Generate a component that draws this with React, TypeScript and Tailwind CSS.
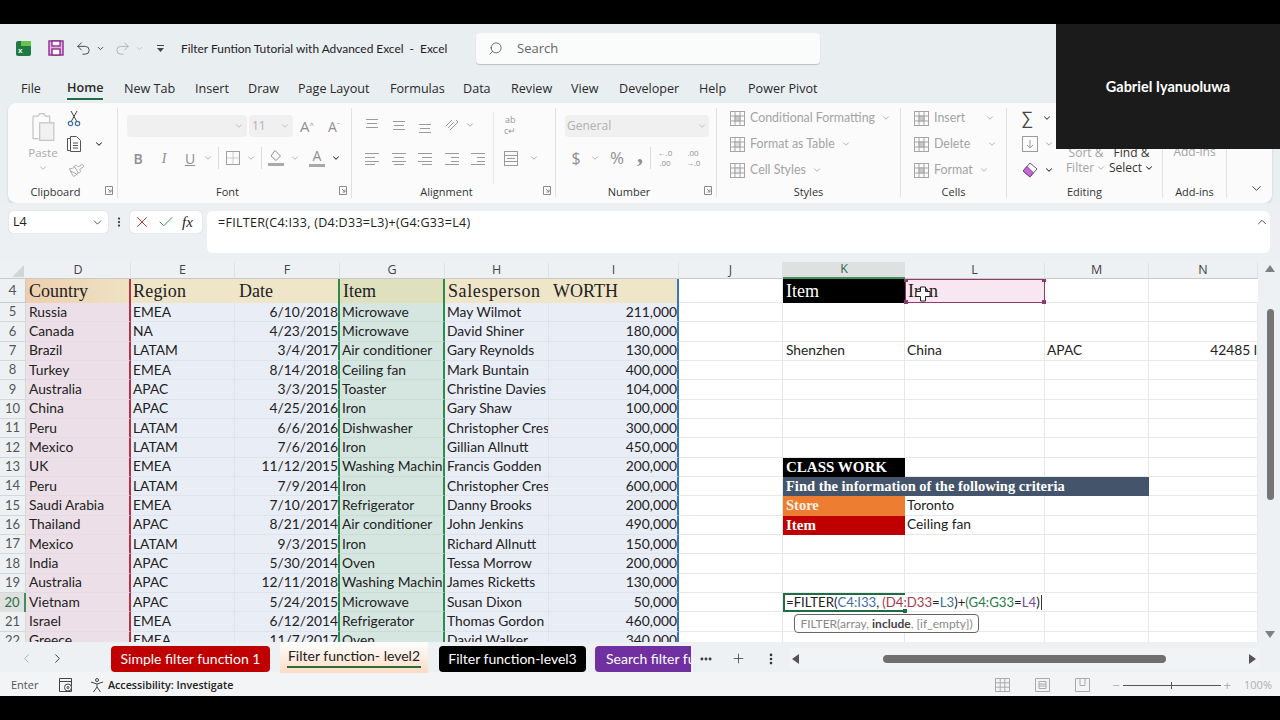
import { ChevronDown, ChevronLeft, ChevronRight, ChevronUp, Check, X, Search, Plus, MoreVertical, MoreHorizontal, Paintbrush, Undo2, Redo2 } from "lucide-react";
import type { ReactNode } from "react";

const ui = "font-['Open_Sans',sans-serif]";
const cellFont = "font-['Lato',sans-serif]";
const serif = "font-['Liberation_Serif',serif]";

const tabs = [
  { label: "File", w: "w-[46px]" },
  { label: "Home", w: "w-[57px]" },
  { label: "New Tab", w: "w-[71px]" },
  { label: "Insert", w: "w-[53px]" },
  { label: "Draw", w: "w-[50px]" },
  { label: "Page Layout", w: "w-[92px]" },
  { label: "Formulas", w: "w-[73px]" },
  { label: "Data", w: "w-[48px]" },
  { label: "Review", w: "w-[60px]" },
  { label: "View", w: "w-[48px]" },
  { label: "Developer", w: "w-[80px]" },
  { label: "Help", w: "w-[49px]" },
  { label: "Power Pivot", w: "w-[90px]" },
];

const rows = [
  [5, "Russia", "EMEA", "6/10/2018", "Microwave", "May Wilmot", "211,000"],
  [6, "Canada", "NA", "4/23/2015", "Microwave", "David Shiner", "180,000"],
  [7, "Brazil", "LATAM", "3/4/2017", "Air conditioner", "Gary Reynolds", "130,000"],
  [8, "Turkey", "EMEA", "8/14/2018", "Ceiling fan", "Mark Buntain", "400,000"],
  [9, "Australia", "APAC", "3/3/2015", "Toaster", "Christine Davies", "104,000"],
  [10, "China", "APAC", "4/25/2016", "Iron", "Gary Shaw", "100,000"],
  [11, "Peru", "LATAM", "6/6/2016", "Dishwasher", "Christopher Cres", "300,000"],
  [12, "Mexico", "LATAM", "7/6/2016", "Iron", "Gillian Allnutt", "450,000"],
  [13, "UK", "EMEA", "11/12/2015", "Washing Machin", "Francis Godden", "200,000"],
  [14, "Peru", "LATAM", "7/9/2014", "Iron", "Christopher Cres", "600,000"],
  [15, "Saudi Arabia", "EMEA", "7/10/2017", "Refrigerator", "Danny Brooks", "200,000"],
  [16, "Thailand", "APAC", "8/21/2014", "Air conditioner", "John Jenkins", "490,000"],
  [17, "Mexico", "LATAM", "9/3/2015", "Iron", "Richard Allnutt", "150,000"],
  [18, "India", "APAC", "5/30/2014", "Oven", "Tessa Morrow", "200,000"],
  [19, "Australia", "APAC", "12/11/2018", "Washing Machin", "James Ricketts", "130,000"],
  [20, "Vietnam", "APAC", "5/24/2015", "Microwave", "Susan Dixon", "50,000"],
  [21, "Israel", "EMEA", "6/12/2014", "Refrigerator", "Thomas Gordon", "460,000"],
  [22, "Greece", "EMEA", "11/7/2017", "Oven", "David Walker", "340,000"],
];

const gridCols = "grid grid-rows-1 grid-cols-[26px_105px_104px_105px_105px_104px_130px_104px_122px_140px_104px_109px]";
const line = "border-r border-b border-[#e6e8ea]";

function Cell({ className = "", children }: { className?: string; children?: ReactNode }) {
  return <div className={`flex items-center overflow-hidden whitespace-nowrap px-[2px] ${className}`}>{children}</div>;
}

function Chev({ className = "text-[#9a9a9a]" }: { className?: string }) {
  return <ChevronDown size={10} strokeWidth={2} className={className} />;
}

// small icon made of horizontal lines, for the alignment buttons
function Lines({ ys, widths }: { ys: number[]; widths: [number, number][] }) {
  return (
    <svg width="16" height="16" viewBox="0 0 16 16" stroke="#9a9a9a" strokeWidth="1">
      {ys.map((y, i) => (
        <line key={y} x1={widths[i][0]} x2={widths[i][1]} y1={y + 0.5} y2={y + 0.5} />
      ))}
    </svg>
  );
}

function Group({ className, label, launcher, children }: { className: string; label: string; launcher?: boolean; children: ReactNode }) {
  return (
    <div className={`flex flex-col border-r border-[#e2e2e2] ${className}`}>
      <div className="flex-1 min-h-0">{children}</div>
      <div className="flex h-[14px] items-center">
        <span className="flex-1 text-center text-[11px] leading-none text-[#333]">{label}</span>
        {launcher && (
          <svg width="14" height="10" viewBox="0 0 14 10" fill="none" stroke="#8a8a8a" strokeWidth="1">
            <path d="M2.5 .5h7v8h-7zM5 3l3 3M8 3.5V6H5.5" />
          </svg>
        )}
      </div>
    </div>
  );
}

function IconText({ icon, text, chevClass = "ml-[2px]" }: { icon: ReactNode; text: string; chevClass?: string }) {
  return (
    <div className={`flex h-[26px] items-center gap-[4px] whitespace-nowrap text-[12.4px] text-[#a3a3a3] ${cellFont}`}>
      {icon}
      <span>{text}</span>
      <Chev className={`text-[#a3a3a3] ${chevClass}`} />
    </div>
  );
}

function TableIcon({ accent = "#c7c7c7" }: { accent?: string }) {
  return (
    <svg width="17" height="17" viewBox="0 0 17 17" fill="none" stroke="#a5a5a5" strokeWidth="1">
      <rect x="1.5" y="1.5" width="14" height="14" />
      <path d="M1.5 6h14M1.5 11h14M6 1.5v14M11 1.5v14" />
      <rect x="6" y="6" width="5" height="5" fill={accent} />
    </svg>
  );
}

function Ribbon() {
  return (
    <div className={`mx-2 flex h-[100px] rounded-lg bg-[#fbfbfb] py-[5px] pr-[8px] shadow-[0_1px_2px_rgba(0,0,0,0.18)] ${ui}`}>
      <Group className="w-[110px]" label="Clipboard" launcher>
        <div className="-mt-[3px] flex">
          <div className="ml-[16px] flex w-[38px] flex-col items-center pt-[7px] text-[#aaa]">
            <svg width="30" height="30" viewBox="0 0 30 36" fill="none" stroke="#c4c4c4" strokeWidth="1.5">
              <path d="M3 5h6l2-3h5l2 3h5v8" />
              <path d="M3 5v27h7" />
              <rect x="11" y="13" width="17" height="21" fill="#f1f1f1" />
            </svg>
            <span className="mt-[4px] text-[11.5px] leading-[14px]">Paste</span>
            <Chev className="mt-[3px] text-[#aaa]" />
          </div>
          <div className="ml-[4px] flex flex-col">
            <div className="flex h-[26px] items-center">
              <svg width="16" height="17" viewBox="0 0 16 17" fill="none">
                <path d="M5 1l5.500 10M11 1L5.500 11" stroke="#444" />
                <circle cx="4.500" cy="13.500" r="2.200" stroke="#3d6f9e" strokeWidth="1.200" />
                <circle cx="11.500" cy="13.500" r="2.200" stroke="#3d6f9e" strokeWidth="1.200" />
              </svg>
            </div>
            <div className="flex h-[26px] items-center gap-[12px]">
              <svg width="16" height="18" viewBox="0 0 16 18" fill="none" stroke="#555" strokeWidth="1">
                <path d="M4 3.5H1.5v12H4" />
                <path d="M4.5 1.5h6l4 4v11h-10z" />
                <path d="M7 8h5M7 10.5h5M7 13h5" />
              </svg>
              <ChevronDown size={10} strokeWidth={2.5} className="text-[#333]" />
            </div>
            <div className="flex h-[26px] items-center"><Paintbrush size={16} strokeWidth={1.2} className="ml-[2px] text-[#a0a0a0] rotate-12" /></div>
          </div>
        </div>
      </Group>

      <Group className="w-[234px]" label="Font" launcher>
        <div className="ml-[9px] mt-[7px] flex h-[22px] items-center">
          <div className="flex h-full w-[120px] items-center justify-end rounded bg-[#f0f0f0] pr-[3px]"><Chev className="text-[#b5b5b5]" /></div>
          <div className="ml-[2px] flex h-full w-[44px] items-center justify-between rounded bg-[#f0f0f0] px-[3px] text-[12px] text-[#b0b0b0]">11<Chev className="text-[#b5b5b5]" /></div>
          <span className="w-[28px] text-center text-[15px] text-[#8f8f8f]">A<sup className="text-[8px]">^</sup></span>
          <span className="w-[26px] text-center text-[14px] text-[#8f8f8f]">A<sup className="text-[8px]">ˇ</sup></span>
        </div>
        <div className="ml-[7px] mt-[10px] flex h-[22px] items-center text-[#8f8f8f]">
          <span className={`w-[26px] text-center text-[14px] font-semibold ${ui}`}>B</span>
          <span className={`w-[26px] text-center text-[14px] italic ${serif}`}>I</span>
          <span className="w-[26px] text-center text-[14px] underline">U</span>
          <Chev className="text-[#aaa]" />
          <div className="mx-[5px] h-[22px] border-r border-[#ddd]" />
          <svg className="ml-[1px]" width="16" height="16" viewBox="0 0 16 16" fill="none" stroke="#a0a0a0" strokeDasharray="1 1">
            <rect x="1.5" y="1.5" width="13" height="13" strokeDasharray="none" />
            <path d="M8 1.5v13M1.5 8h13" />
          </svg>
          <Chev className="ml-[5px] text-[#aaa]" />
          <div className="mx-[5px] h-[22px] border-r border-[#ddd]" />
          <svg width="18" height="18" viewBox="0 0 18 18" fill="none" stroke="#8f8f8f" strokeWidth="1">
            <path d="M8 1.5l5.500 5.500-4.500 4.500L4 7z" />
            <rect x="1" y="14" width="16" height="3" fill="#a9a9a9" stroke="none" />
          </svg>
          <Chev className="ml-[5px] text-[#aaa]" />
          <div className="ml-[8px] flex w-[18px] flex-col items-center">
            <span className="text-[14px] leading-[14px]">A</span>
            <div className="mt-[1px] h-[3px] w-[16px] bg-[#a9a9a9]" />
          </div>
          <ChevronDown size={10} strokeWidth={2.5} className="ml-[5px] text-[#333]" />
        </div>
      </Group>

      <Group className="w-[204px]" label="Alignment" launcher>
        <div className="flex">
          <div className="ml-[7px] w-[135px] border-r border-[#e5e5e5] h-[72px] mt-[4px]">
            <div className="flex h-[26px] items-center">
              <div className="flex w-[26.5px] justify-center"><Lines ys={[2, 6, 10]} widths={[[2, 14], [3, 13], [2, 14]]} /></div>
              <div className="flex w-[26.5px] justify-center"><Lines ys={[4, 8, 12]} widths={[[2, 14], [3, 13], [2, 14]]} /></div>
              <div className="flex w-[26.5px] justify-center"><Lines ys={[7, 11, 15]} widths={[[2, 14], [3, 13], [2, 14]]} /></div>
              <div className="flex w-[26.5px] justify-center">
                <svg width="16" height="16" viewBox="0 0 16 16" fill="none" stroke="#9a9a9a"><path d="M2 9l6-6M4 11l6-6M6 13l6-6M12 3l2 2-2 2" /></svg>
              </div>
              <Chev />
            </div>
            <div className="mt-[7px] flex h-[26px] items-center">
              <div className="flex w-[26.5px] justify-center"><Lines ys={[3, 7, 11, 14]} widths={[[1, 15], [1, 11], [1, 15], [1, 11]]} /></div>
              <div className="flex w-[26.5px] justify-center"><Lines ys={[3, 7, 11, 14]} widths={[[1, 15], [3, 13], [1, 15], [3, 13]]} /></div>
              <div className="flex w-[26.5px] justify-center"><Lines ys={[3, 7, 11, 14]} widths={[[1, 15], [5, 15], [1, 15], [5, 15]]} /></div>
              <div className="flex w-[26.5px] justify-center"><Lines ys={[3, 7, 11, 14]} widths={[[1, 15], [7, 15], [7, 15], [1, 15]]} /></div>
              <div className="flex w-[26.5px] justify-center"><Lines ys={[3, 7, 11, 14]} widths={[[1, 15], [7, 15], [7, 15], [1, 15]]} /></div>
            </div>
          </div>
          <div className="ml-[9px] mt-[4px] flex flex-col">
            <div className="flex h-[26px] items-center pl-[1px] text-[9px] leading-[11px] text-[#999]"><span className="text-center">ab<br />c↵</span></div>
            <div className="mt-[7px] flex h-[26px] items-center gap-[10px]">
              <svg width="16" height="17" viewBox="0 0 16 17" fill="none" stroke="#9a9a9a"><rect x="1.5" y="1.5" width="13" height="14" /><path d="M1.5 5.5h13M1.5 11.5h13M4 8.5h8" /></svg>
              <Chev />
            </div>
          </div>
        </div>
      </Group>

      <Group className="w-[161px]" label="Number" launcher>
        <div className="ml-[9px] mt-[7px] flex h-[22px] w-[144px] items-center justify-between rounded bg-[#f0f0f0] px-[2px] text-[12px] text-[#b0b0b0]">
          General<Chev className="text-[#b5b5b5]" />
        </div>
        <div className="ml-[14px] mt-[10px] flex h-[22px] items-center text-[#8f8f8f]">
          <span className="w-[12px] text-center text-[16px]">$</span>
          <Chev className="ml-[8px] text-[#aaa]" />
          <span className="ml-[7px] w-[20px] text-center text-[17px]">%</span>
          <span className={`ml-[6px] -mt-[8px] w-[14px] text-center text-[24px] font-bold leading-none ${serif}`}>,</span>
          <div className="mx-[3px] h-[22px] border-r border-[#ddd]" />
          <span className="w-[22px] text-center text-[8px] leading-[10px]">←.0<br />.00</span>
          <span className="ml-[6px] w-[22px] text-center text-[8px] leading-[10px]">.00<br />→.0</span>
        </div>
      </Group>

      <Group className="w-[184px]" label="Styles">
        <div className="-mt-[3px] pl-[12px]">
          <IconText icon={<TableIcon />} text="Conditional Formatting" />
          <IconText icon={<TableIcon accent="#dcdcdc" />} text="Format as Table" />
          <IconText icon={<TableIcon accent="#eeeeee" />} text="Cell Styles" />
        </div>
      </Group>

      <Group className="w-[106px]" label="Cells">
        <div className="-mt-[3px] pl-[12px]">
          <IconText icon={<TableIcon />} text="Insert" chevClass="ml-[16px]" />
          <IconText icon={<TableIcon />} text="Delete" chevClass="ml-[13px]" />
          <IconText icon={<TableIcon />} text="Format" />
        </div>
      </Group>

      <Group className="w-[156px]" label="Editing">
        <div className="-mt-[3px] flex">
          <div className="ml-[15px] flex w-[42px] flex-col">
            <div className="flex h-[26px] items-center gap-[9px] text-[17px] text-[#444]"><span>∑</span><ChevronDown size={10} strokeWidth={2.5} /></div>
            <div className="flex h-[26px] items-center gap-[6px]">
              <svg width="16" height="16" viewBox="0 0 16 16" fill="none" stroke="#9a9a9a"><rect x=".5" y=".5" width="15" height="15" /><path d="M8 4v8M5 9l3 3 3-3" /></svg>
              <Chev />
            </div>
            <div className="flex h-[26px] items-center gap-[6px]">
              <svg width="16" height="16" viewBox="0 0 16 16"><path d="M1 9l7-8 7 6-7 8z" fill="#fff" stroke="#7c3f98" /><path d="M1 9l4-4.500 6 6L8 15z" fill="#c36ad0" stroke="#7c3f98" /></svg>
              <ChevronDown size={10} strokeWidth={2.5} className="text-[#333]" />
            </div>
          </div>
          <div className="flex h-[78px] flex-col justify-end pb-[8px] text-[12px] leading-[15px]">
            <div className="flex">
              <div className="w-[44px] text-center text-[#a3a3a3]">Sort &amp;<div className="flex items-center justify-center gap-[2px]">Filter <Chev className="text-[#a3a3a3]" /></div></div>
              <div className="w-[47px] text-center text-[#333]">Find &amp;<div className="flex items-center justify-center gap-[2px]">Select <ChevronDown size={10} strokeWidth={2.5} /></div></div>
            </div>
          </div>
        </div>
      </Group>

      <Group className="w-[64px]" label="Add-ins">
        <div className="pt-[36px] text-center text-[12px] leading-[15px] text-[#a3a3a3]">Add-ins</div>
      </Group>

      <div className="flex flex-1 items-end justify-end pb-[2px]">
        <ChevronDown size={15} strokeWidth={1.5} className="text-[#333]" />
      </div>
    </div>
  );
}

function Sheet() {
  const letters = ["D", "E", "F", "G", "H", "I", "J", "K", "L", "M", "N"];
  const bodyCols = [
    "bg-[#ecdfe7] !pl-[3px] border-r-2 border-b border-r-[#b8324a] border-b-[#e4dbe3]",
    "bg-[#e9edf6] border-r border-b border-[#dfe3ec]",
    "bg-[#e9edf6] !pr-0 justify-end border-r-2 border-b border-r-[#2e8b4f] border-b-[#dfe3ec]",
    "bg-[#d5e6e1] border-r-2 border-b border-r-[#2e8b4f] border-b-[#c9dcd6]",
    "bg-[#e9edf6] border-r border-b border-[#dfe3ec]",
    "bg-[#e9edf6] !pr-0 justify-end border-r-2 border-b border-r-[#3a78b8] border-b-[#dfe3ec]",
  ];
  const extra: Record<number, ReactNode[]> = {
    7: [
      <Cell key="j" className={line} />,
      <Cell key="k" className={`${line} !pl-[3px]`}>Shenzhen</Cell>,
      <Cell key="l" className={line}>China</Cell>,
      <Cell key="m" className={line}>APAC</Cell>,
      <Cell key="n" className={`${line} justify-end !px-0`}>42485 l</Cell>,
    ],
    13: [
      <Cell key="j" className={line} />,
      <Cell key="k" className={`bg-black !pl-[3px] text-[15px] font-bold text-white ${serif}`}>CLASS WORK</Cell>,
      <Cell key="l" className={line} />,
      <Cell key="m" className={line} />,
      <Cell key="n" className={line} />,
    ],
    14: [
      <Cell key="j" className={line} />,
      <Cell key="k" className={`col-span-3 bg-[#44546a] !pl-[3px] text-[14.5px] font-bold text-white ${serif}`}>Find the information of the following criteria</Cell>,
      <Cell key="n" className={line} />,
    ],
    15: [
      <Cell key="j" className={line} />,
      <Cell key="k" className={`bg-[#ed7d31] !pl-[3px] text-[14.5px] font-bold text-[#fff2e6] ${serif}`}>Store</Cell>,
      <Cell key="l" className={line}>Toronto</Cell>,
      <Cell key="m" className={line} />,
      <Cell key="n" className={line} />,
    ],
    16: [
      <Cell key="j" className={line} />,
      <Cell key="k" className={`bg-[#c00000] !pl-[3px] text-[15px] font-bold text-white ${serif}`}>Item</Cell>,
      <Cell key="l" className={line}>Ceiling fan</Cell>,
      <Cell key="m" className={line} />,
      <Cell key="n" className={line} />,
    ],
    20: [
      <Cell key="j" className={line} />,
      <div key="k" className="relative z-10 border-y-2 border-l-2 border-[#1f6b45]">
        <div className="absolute left-[1px] top-0 flex h-[15px] items-center whitespace-nowrap text-[13.2px] text-[#222]">
          =FILTER(<span className="text-[#3a6ea5]">C4:I33</span>, <span className="ml-[3px] text-[#a33b4a]">(D4:D33</span>=<span className="text-[#3a6ea5]">L3</span>)+<span className="text-[#1f7a45]">(G4:G33</span>=<span className="text-[#7a4a9c]">L4</span>)
          <span className="ml-[1px] h-[15px] border-r border-[#333]" />
        </div>
        <span className="absolute -bottom-[3px] -right-[2px] h-[4px] w-[4px] bg-[#1f6b45]" />
      </div>,
      <Cell key="l" className="border-b border-[#e6e8ea]" />,
      <Cell key="m" className={line} />,
      <Cell key="n" className={line} />,
    ],
  };
  const blank = [
    <Cell key="j" className={line} />,
    <Cell key="k" className={line} />,
    <Cell key="l" className={line} />,
    <Cell key="m" className={line} />,
    <Cell key="n" className={line} />,
  ];

  return (
    <div className="flex h-[380px] bg-[#eef1f3]">
      <div className="flex w-[1258px] flex-col">
        <div className={`${gridCols} h-[17px] shrink-0 text-[12.5px] text-[#444] ${ui}`}>
          <div className="flex items-end justify-end border-b border-[#c9c9c9] pb-[1px] pr-[2px]">
            <div className="h-0 w-0 border-b-[12px] border-l-[12px] border-b-[#d2d5d7] border-l-transparent" />
          </div>
          {letters.map((l) => (
            <div
              key={l}
              className={
                l === "K"
                  ? "flex items-center justify-center border-b-2 border-[#3f8f5f] bg-[#dfe1e0] text-[#2f6b48]"
                  : "flex items-center justify-center border-r border-b border-r-[#dfe2e4] border-b-[#c9c9c9]"
              }
            >
              {l}
            </div>
          ))}
        </div>

        <div className={`min-h-0 flex-1 overflow-hidden bg-white text-[13.8px] text-[#222] ${cellFont}`}>
          <div className={`${gridCols} h-[24px]`}>
            <div className="flex items-center justify-center border-r border-b border-[#c9c9c9] bg-[#eef1f3] text-[#555]">4</div>
            <Cell className={`bg-gradient-to-r from-[#edcfae] to-[#eee2c3] border-r-2 border-r-[#b8324a] text-[18px] !px-[3px] ${serif}`}>Country</Cell>
            <Cell className={`bg-[#efe5c8] text-[18px] tracking-[0.2px] ${serif}`}>Region</Cell>
            <Cell className={`bg-[#efe5c8] !pl-[4px] border-r-2 border-r-[#2e8b4f] text-[18px] ${serif}`}>Date</Cell>
            <Cell className={`bg-[#dfe0bd] !pl-[3px] border-r-2 border-r-[#2e8b4f] text-[18px] ${serif}`}>Item</Cell>
            <Cell className={`bg-[#efe5c8] !pl-[3px] tracking-[0.6px] text-[18px] ${serif}`}>Salesperson</Cell>
            <Cell className={`bg-[#efe5c8] border-r-2 border-r-[#3a78b8] text-[18px] !px-[4px] ${serif}`}>WORTH</Cell>
            <Cell className={line} />
            <Cell className={`bg-black !pl-[3px] text-[18px] text-white ${serif}`}>Item</Cell>
            <Cell className={`relative !overflow-visible border border-[#8e3a6d] bg-[#f8e7f0] text-[18px] ${serif}`}>
              Iron
              <span className="absolute -left-[2px] -top-[2px] h-[4px] w-[4px] bg-[#8e3a6d]" />
              <span className="absolute -right-[2px] -top-[2px] h-[4px] w-[4px] bg-[#8e3a6d]" />
              <span className="absolute -left-[2px] -bottom-[2px] h-[4px] w-[4px] bg-[#8e3a6d]" />
              <span className="absolute -right-[2px] -bottom-[2px] h-[4px] w-[4px] bg-[#8e3a6d]" />
            </Cell>
            <Cell className={line} />
            <Cell className="border-b border-[#e6e8ea]" />
          </div>
          {rows.map((r) => (
            <div key={r[0]} className={`${gridCols} h-[19.33px]`}>
              <div
                className={
                  r[0] === 20
                    ? "flex items-center justify-center border-r-2 border-[#3f8f5f] bg-[#dfe1e0] text-[13px] text-[#2f6b48]"
                    : "flex items-center justify-center border-r border-b border-[#d5d7d9] bg-[#eef1f3] text-[13px] text-[#555]"
                }
              >
                {r[0]}
              </div>
              {r.slice(1).map((v, i) => (
                <Cell key={i} className={bodyCols[i]}>{v}</Cell>
              ))}
              {extra[r[0] as number] ?? blank}
            </div>
          ))}
        </div>
      </div>

      <div className="flex w-[22px] flex-col items-center pl-[2px] pt-[2px] text-[#777]">
        <div className="mt-[1px] h-0 w-0 border-x-[5px] border-b-[7px] border-x-transparent border-b-[#808080]" />
        <div className="mt-[37px] h-[191px] w-[7px] rounded bg-[#757575]" />
        <div className="mt-[131px] h-0 w-0 border-x-[5px] border-t-[7px] border-x-transparent border-t-[#808080]" />
      </div>
    </div>
  );
}

function SheetTabs() {
  return (
    <div className={`relative z-10 flex h-[30px] items-center bg-[#eef1f3] pt-[3px] text-[13.5px] ${cellFont}`}>
      <ChevronLeft size={15} strokeWidth={1.2} className="ml-[19px] text-[#999]" />
      <ChevronRight size={15} strokeWidth={1.5} className="ml-[16px] text-[#333]" />
      <div className="ml-[46px] -mt-[3px] flex h-[31px] w-[580px] items-end self-start overflow-hidden">
        <div className="mb-[1px] flex h-[26px] w-[159px] shrink-0 items-center justify-center rounded bg-[#c00000] pb-[2px] text-[14px] text-white">Simple filter function 1</div>
        <div className="ml-[10px] flex h-[31px] w-[148px] shrink-0 flex-col items-center justify-center bg-gradient-to-b from-white to-[#fbdcc4] pb-[2px] text-[14px] text-[#222]">
          <span className="border-b-2 border-[#2f6b38] px-[1px] leading-[21px]">Filter function- level2</span>
        </div>
        <div className="mb-[1px] ml-[11px] flex h-[26px] w-[147px] shrink-0 items-center justify-center rounded bg-black pb-[2px] text-[14px] text-white">Filter function-level3</div>
        <div className="mb-[1px] ml-[9px] flex h-[26px] w-[105px] shrink-0 items-center overflow-hidden rounded-l bg-[#7030a0] pb-[2px] pl-[11px] text-[14px] whitespace-nowrap text-white">Search filter function</div>
      </div>
      <MoreHorizontal size={14} strokeWidth={3} className="ml-[8px] text-[#333]" />
      <Plus size={15} strokeWidth={1.2} className="ml-[18px] text-[#333]" />
      <MoreVertical size={14} strokeWidth={2.5} className="ml-[18px] text-[#333]" />
      <div className="ml-[12px] flex h-[21px] w-[470px] items-center bg-[#f1f3f5]">
        <div className="ml-[2px] h-0 w-0 border-y-[5px] border-r-[7px] border-y-transparent border-r-[#555]" />
        <div className="ml-[84px] h-[8px] w-[283px] rounded bg-[#6f6f6f]" />
        <div className="ml-[83px] h-0 w-0 border-y-[5px] border-l-[7px] border-y-transparent border-l-[#555]" />
      </div>
    </div>
  );
}

function StatusBar() {
  return (
    <div className={`flex h-[24px] items-center bg-[#f3f4f5] pt-[2px] text-[11px] text-[#555] ${ui}`}>
      <span className="ml-[11px] w-[46px]">Enter</span>
      <svg width="16" height="16" viewBox="0 0 16 16" fill="none" stroke="#444" className="ml-[1px]">
        <path d="M1.5 1.5h12v13h-12zM1.5 4.5h12" /><circle cx="10" cy="10.5" r="3.5" fill="#f3f4f5" /><circle cx="10" cy="10.5" r="1" />
      </svg>
      <svg width="16" height="16" viewBox="0 0 16 16" fill="none" stroke="#444" className="ml-[15px]">
        <circle cx="8" cy="3" r="1.5" /><path d="M2 5l6 2 6-2M8 7v3l-3.5 5M8 10l3.5 5" />
      </svg>
      <span className="ml-[3px] text-[10.7px] font-semibold text-[#222]">Accessibility: Investigate</span>
      <div className="ml-auto flex items-center pr-[8px] text-[#b0b0b0]">
        <svg width="15" height="14" viewBox="0 0 15 14" fill="none" stroke="#aaa"><path d="M.5.5h14v13H.5zM.5 4.8h14M.5 9.2h14M5.2.5v13M9.8.5v13" /></svg>
        <svg width="15" height="14" viewBox="0 0 15 14" fill="none" stroke="#aaa" className="ml-[25px]"><path d="M.5.5h14v13H.5zM4 3.5h7v7H4zM4 6h7M4 8h7" /></svg>
        <svg width="15" height="14" viewBox="0 0 15 14" fill="none" stroke="#aaa" className="ml-[25px]"><path d="M.5.5h14v13H.5zM5 .5v7h5v-7" /></svg>
        <span className="ml-[22px] text-[13px] leading-none">−</span>
        <div className="relative ml-[3px] h-px w-[98px] bg-[#555]">
          <span className="absolute left-[48px] -top-[3px] h-[7px] w-px bg-[#555]" />
        </div>
        <span className="ml-[3px] text-[13px] leading-none">+</span>
        <span className="ml-[13px]">100%</span>
      </div>
    </div>
  );
}

export default function App() {
  return (
    <div className="relative flex h-[720px] w-[1280px] flex-col overflow-hidden bg-black">
      <div className="h-[24px] shrink-0" />
      <div className={`flex h-[48px] shrink-0 items-center bg-[#e9eef1] ${ui}`}>
        <svg width="15" height="15" viewBox="0 0 15 15" className="ml-[16px]">
          <rect width="15" height="15" rx="2" fill="#1f7a45" />
          <rect x="5" width="10" height="5" fill="#6cc24a" />
          <text x="2" y="12" fontSize="8" fontWeight="bold" fill="#fff" fontFamily="Liberation Sans">x</text>
        </svg>
        <svg width="16" height="16" viewBox="0 0 16 16" className="ml-[17px]" fill="#eab3e8" stroke="#8a2d8e" strokeWidth="1.4">
          <rect x="1" y="1" width="14" height="14" />
          <rect x="4" y="1" width="8" height="5" fill="#fff" />
          <rect x="4" y="9" width="8" height="6" fill="#fff" />
        </svg>
        <Undo2 size={17} strokeWidth={1.2} className="ml-[11px] text-[#333]" />
        <ChevronDown size={9} strokeWidth={2.5} className="ml-[4px] text-[#444]" />
        <Redo2 size={17} strokeWidth={1.2} className="ml-[9px] text-[#aaa]" />
        <ChevronDown size={9} strokeWidth={1.5} className="ml-[4px] text-[#aaa]" />
        <svg width="9" height="9" viewBox="0 0 9 9" className="ml-[12px]" fill="#444"><path d="M1 1h7v1H1zM1 4h7L4.500 8z" /></svg>
        <span className={`ml-[16px] w-[295px] whitespace-nowrap pt-[1px] text-[11.9px] text-[#222] ${cellFont}`}>Filter Funtion Tutorial with Advanced Excel&nbsp; -&nbsp; Excel</span>
        <div className="flex h-[31px] w-[344px] items-center rounded bg-[#fafbfb] pt-[1px] shadow-[0_1px_1px_rgba(0,0,0,0.2)]">
          <Search size={15} strokeWidth={1.2} className="ml-[12px] -scale-x-100 text-[#444]" />
          <span className="ml-[14px] text-[13px] text-[#666]">Search</span>
        </div>
      </div>

      <div className={`flex h-[31px] shrink-0 items-center bg-[#e9eef1] pl-[21px] pt-[3px] text-[12.6px] text-[#2a2a2a] ${ui}`}>
        {tabs.map((t) => (
          <div key={t.label} className={t.w}>
            {t.label === "Home" ? (
              <span className="inline-block border-b-2 border-[#1f6b45] font-semibold leading-[20px]">Home</span>
            ) : (
              t.label
            )}
          </div>
        ))}
      </div>

      <div className="shrink-0 bg-[#e9eef1]">
        <Ribbon />
      </div>

      <div className={`flex h-[59px] shrink-0 items-start bg-[#edf0f2] pt-[8px] text-[13px] text-[#222] ${ui}`}>
        <div className="ml-[9px] flex h-[22px] w-[99px] items-center justify-between rounded bg-white px-[4px] shadow-[0_0_1px_rgba(0,0,0,0.3)]">
          <span className="text-[12.5px]">L4</span>
          <ChevronDown size={13} strokeWidth={1.5} className="text-[#333]" />
        </div>
        <MoreVertical size={12} strokeWidth={2.5} className="ml-[5px] mt-[5px] text-[#333]" />
        <div className="ml-[5px] flex h-[22px] w-[72px] items-center rounded bg-white pl-[3px] shadow-[0_0_1px_rgba(0,0,0,0.3)]">
          <X size={18} strokeWidth={1.3} className="text-[#b8322a]" />
          <Check size={18} strokeWidth={1.3} className="ml-[6px] text-[#2e8b57]" />
          <span className={`ml-[7px] text-[15px] italic ${serif}`}>fx</span>
        </div>
        <div className="ml-[5px] flex h-[42px] w-[1063px] items-start justify-between rounded-md bg-white pl-[11px] pr-[1px] pt-[3px] text-[12.5px] tracking-[0.3px]">
          <span>=FILTER(C4:I33, (D4:D33=L3)+(G4:G33=L4)</span>
          <ChevronUp size={14} strokeWidth={1.5} className="mt-[1px] text-[#333]" />
        </div>
      </div>

      <Sheet />
      <SheetTabs />
      <StatusBar />
      <div className="flex-1 bg-black" />

      {/* overlays: presenter tile, function hint and mouse pointer */}
      <div className="absolute left-[1056px] top-[24px] z-20 flex h-[125px] w-[224px] items-center justify-center bg-[#1b1b1b]">
        <span className={`text-[14.5px] font-bold text-white ${cellFont}`}>Gabriel Iyanuoluwa</span>
      </div>
      <div className={`absolute left-[794px] top-[614px] z-20 flex h-[19px] w-[185px] items-center justify-center rounded border border-[#666] bg-white text-[12px] whitespace-nowrap text-[#888] ${cellFont}`}>
        FILTER(array,&nbsp;<b className="text-[#444]">include</b>, [if_empty])
      </div>
      <svg className="absolute left-[915px] top-[286px] z-20" width="16" height="16" viewBox="0 0 16 16">
        <path d="M5.500 1h5v4.500H15v5h-4.500V15h-5v-4.500H1v-5h4.500z" fill="#fff" stroke="#222" strokeWidth="1" />
      </svg>
    </div>
  );
}
